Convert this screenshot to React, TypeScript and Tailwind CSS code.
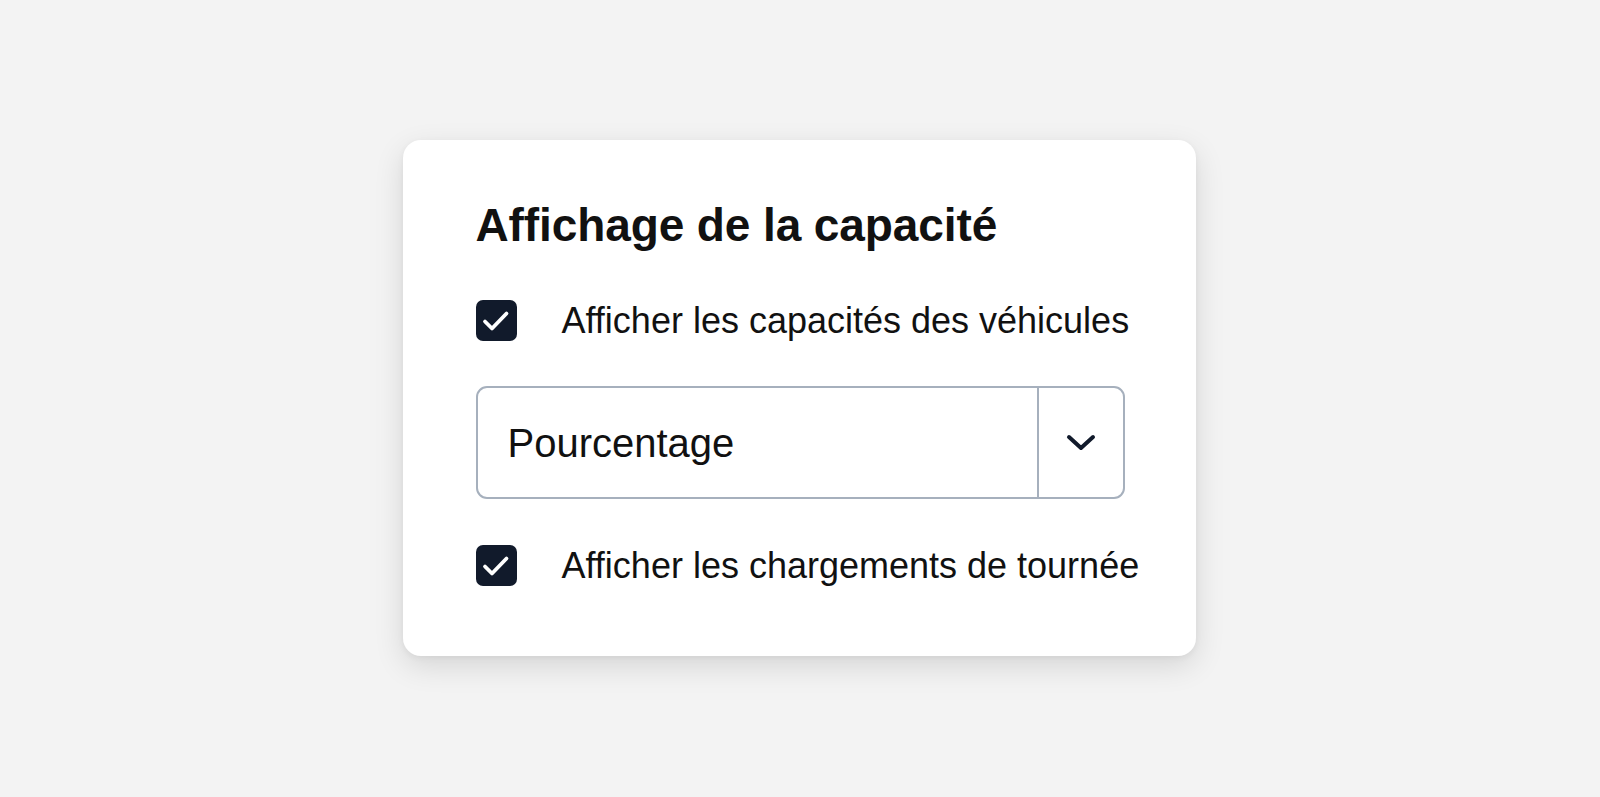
import { useState } from "react";

function CheckBox({ checked, onToggle }: { checked: boolean; onToggle: () => void }) {
  return (
    <button
      type="button"
      onClick={onToggle}
      className={`w-[41px] h-[41px] shrink-0 rounded-[7px] flex items-center justify-center ${
        checked ? "bg-[#111a2b]" : "bg-white border-2 border-[#9aa5b4]"
      }`}
    >
      {checked && (
        <svg width="41" height="41" viewBox="0 0 41 41" fill="none">
          <path d="M9 21.5 L16 28.5 L30.5 13.5" stroke="white" strokeWidth="3.8" strokeLinecap="round" strokeLinejoin="round" />
        </svg>
      )}
    </button>
  );
}

export default function App() {
  const [showCapacity, setShowCapacity] = useState(true);
  const [showLoads, setShowLoads] = useState(true);
  const [mode, setMode] = useState("Pourcentage");

  return (
    <div className="min-h-screen w-full bg-[#f3f3f3] flex items-start justify-center pt-[140px] font-['Liberation_Sans',Arial,sans-serif] text-[#111]">
      <div className="ml-[-2px] w-[793px] bg-white rounded-[18px] shadow-[0_10px_30px_rgba(0,0,0,0.12),0_2px_6px_rgba(0,0,0,0.05)] pt-[62px] pb-[70px] px-[73px] flex flex-col">
        <h2 className="text-[46px] leading-none font-bold tracking-[-0.1px] whitespace-nowrap">Affichage de la capacité</h2>

        <label className="mt-[52px] flex items-center gap-[45px] cursor-pointer">
          <CheckBox checked={showCapacity} onToggle={() => setShowCapacity(!showCapacity)} />
          <span className="text-[36px] leading-[41px] whitespace-nowrap">Afficher les capacités des véhicules</span>
        </label>

        <div className="mt-[45px] w-[649px] h-[113px] rounded-[11px] border-2 border-[#a6b0bd] flex items-stretch overflow-hidden">
          <div className="flex-1 flex items-center pl-[30px] text-[40px]">{mode}</div>
          <button
            type="button"
            onClick={() => setMode(mode === "Pourcentage" ? "Valeur" : "Pourcentage")}
            className="w-[86px] border-l-2 border-[#a6b0bd] flex items-center justify-center"
          >
            <svg width="30" height="18" viewBox="0 0 30 18" fill="none">
              <path d="M3 3 L15 14 L27 3" stroke="#111a2b" strokeWidth="4" strokeLinecap="round" strokeLinejoin="round" />
            </svg>
          </button>
        </div>

        <label className="mt-[46px] flex items-center gap-[45px] cursor-pointer">
          <CheckBox checked={showLoads} onToggle={() => setShowLoads(!showLoads)} />
          <span className="text-[36px] leading-[41px] whitespace-nowrap">Afficher les chargements de tournée</span>
        </label>
      </div>
    </div>
  );
}
